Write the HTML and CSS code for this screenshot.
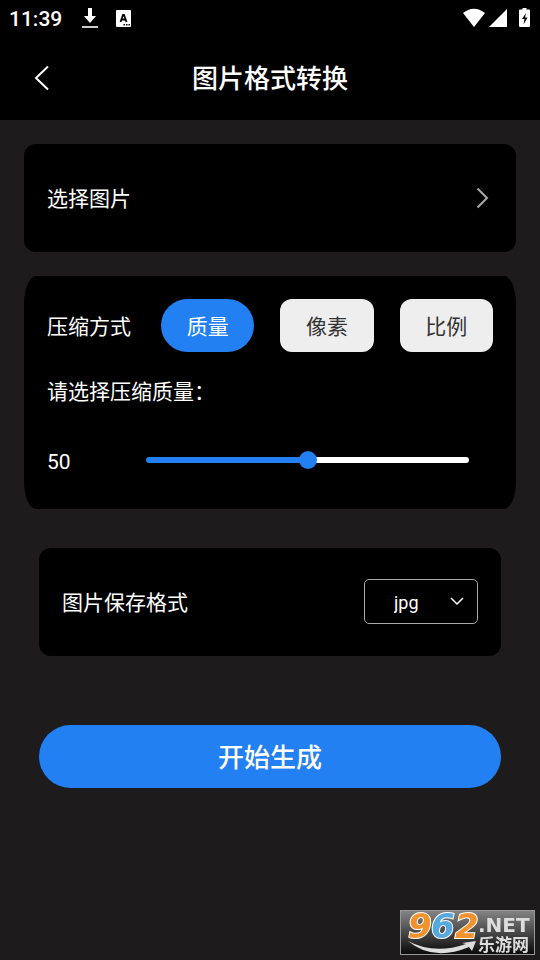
FILE: index.html
```html
<!DOCTYPE html>
<html lang="zh-CN">
<head>
<meta charset="utf-8">
<meta name="viewport" content="width=device-width, initial-scale=1">
<title>图片格式转换</title>
<link rel="stylesheet" href="styles.css">
</head>
<body>
<header class="top">
  <div class="status">
    <span class="clock">11:39</span>
    <svg class="download" width="16" height="20" viewBox="0 0 16 20" aria-hidden="true"><path d="M6 0h4v8h4l-6 7-6-7h4z" fill="#fff"/><path d="M0 18h16v2H0z" fill="#ccc"/></svg>
    <svg class="lang" width="15" height="17" viewBox="0 0 15 17" aria-hidden="true"><rect width="15" height="17" rx="1" fill="#fff"/><path d="M4.500 12 7 5h1l2.500 7M5.500 9.500h4" fill="none" stroke="#000" stroke-width="1.800"/><path d="M7.500 14h1.500v1.500H7.500zM10 14h1.500v1.500H10zM12.500 14H14v1.500h-1.500z" fill="#000"/></svg>
    <svg class="signals" width="68" height="20" viewBox="0 0 68 20" aria-hidden="true"><g fill="#fff"><path d="M0 5Q11-3.500 22 5L11 19z"/><path d="M26 19 44 1v18z"/><path d="M57 1.500h2.500V0h4v1.500H66q1 0 1 1V18q0 1-1 1h-9q-1 0-1-1V2.500q0-1 1-1z"/></g><path d="M63 5 59 11h2.500l-1 5.500 4-7H62z" fill="#000"/></svg>
  </div>
  <div class="bar">
    <button class="back" type="button" aria-label="返回"><svg width="16" height="26" viewBox="0 0 16 26"><path d="M14 1.500 2 13l12 11.500" fill="none" stroke="#fff" stroke-width="2"/></svg></button>
    <h1>图片格式转换</h1>
  </div>
</header>
<main>
  <button class="card pick" type="button">
    <span class="caption">选择图片</span>
    <svg width="13" height="22" viewBox="0 0 13 22" aria-hidden="true"><path d="M1.500 1.500 11 11l-9.500 9.500" fill="none" stroke="#aaa" stroke-width="2"/></svg>
  </button>
  <section class="card compress">
    <div class="modes">
      <span class="caption label">压缩方式</span>
      <button class="mode active" type="button" aria-pressed="true">质量</button>
      <button class="mode" type="button" aria-pressed="false">像素</button>
      <button class="mode" type="button" aria-pressed="false">比例</button>
    </div>
    <label class="hint" for="quality">请选择压缩质量：</label>
    <div class="quality">
      <output for="quality">50</output>
      <input id="quality" type="range" min="0" max="100" value="50">
    </div>
  </section>
  <div class="card save">
    <label class="caption" for="format">图片保存格式</label>
    <span class="picker">
      <select id="format"><option>jpg</option><option>png</option><option>webp</option></select>
      <svg width="14" height="9" viewBox="0 0 14 9" aria-hidden="true"><path d="m1 1 6 6 6-6" fill="none" stroke="#fff" stroke-width="1.500"/></svg>
    </span>
  </div>
  <button class="start" type="button">开始生成</button>
</main>
<svg class="mark" width="135" height="45" viewBox="0 0 135 45" role="img" aria-label="962.NET 乐游网">
  <defs>
    <linearGradient id="plate" x2="0" y2="1"><stop offset="0" stop-color="#858585"/><stop offset=".5" stop-color="#484848"/><stop offset="1" stop-color="#080808"/></linearGradient>
  </defs>
  <rect x=".5" y=".5" width="134" height="44" fill="url(#plate)" stroke="#999"/>
  <path d="M8 31Q34 45 66 34l-4-1 14-2-4 10-3-4Q33 52 8 31z" fill="#ddd"/>
  <g class="digits"><text x="8" y="28" fill="#f2922c">9</text><text x="31" y="28" fill="#55a9df">6</text><text x="55" y="28" fill="#f2922c">2</text></g>
  <text class="net" x="78" y="22">.NET</text>
  <text class="site" x="78" y="41">乐游网</text>
</svg>
</body>
</html>
```
FILE: styles.css
```css
* {
  box-sizing: border-box;
}

body {
  margin: 0;
  min-height: 100vh;
  background: #1d1b1c;
  color: #fff;
  font-family: Roboto, "Noto Sans CJK SC", sans-serif;
  font-size: 21px;
  line-height: 32px;
}

button,
select {
  margin: 0;
  padding: 0;
  border: 0;
  background: none;
  color: inherit;
  font: inherit;
}

svg {
  display: block;
}

.top {
  height: 120px;
  background: #000;
}

.status {
  display: flex;
  align-items: center;
  height: 36px;
  padding: 0 9px;
}

.clock {
  padding-top: 2px;
  font-weight: 500;
}

.download {
  margin-left: 20px;
}

.lang {
  margin-left: 18px;
}

.signals {
  margin-left: auto;
}

.bar {
  display: grid;
  grid-template-columns: 84px 1fr 84px;
  align-items: center;
  height: 84px;
}

.back {
  display: flex;
  justify-content: center;
}

h1 {
  margin: 0;
  padding-top: 2px;
  font-size: 26px;
  font-weight: 500;
  text-align: center;
}

main {
  display: flex;
  flex-direction: column;
  padding: 24px;
}

.card {
  padding: 23px;
  border-radius: 12px;
  background: #000;
}

.caption {
  padding-top: 2px;
}

.pick {
  display: flex;
  align-items: center;
  justify-content: space-between;
  min-height: 108px;
  padding-right: 27px;
  text-align: left;
}

.compress {
  margin-top: 24px;
  padding-bottom: 31px;
  border-radius: 12px / 28px;
}

.modes {
  display: flex;
  align-items: center;
  gap: 26px;
}

.label {
  margin-right: 4px;
}

.mode {
  flex: 1;
  height: 53px;
  padding-top: 2px;
  border-radius: 12px;
  background: #eee;
  color: #333;
}

.mode.active {
  border-radius: 27px;
  background: #2380f2;
  color: #fff;
}

.hint {
  display: block;
  margin-top: 24px;
}

.quality {
  display: flex;
  align-items: center;
  margin-top: 38px;
  padding-right: 24px;
}

.quality output {
  width: 99px;
}

.quality input {
  flex: 1;
  min-width: 0;
  height: 18px;
  margin: 0 0 4px;
  appearance: none;
  background: none;
}

.quality input::-webkit-slider-runnable-track {
  height: 6px;
  border-radius: 3px;
  background: linear-gradient(90deg, #2380f2 50%, #fff 50%);
}

.quality input::-webkit-slider-thumb {
  width: 18px;
  height: 18px;
  margin-top: -6px;
  appearance: none;
  border-radius: 50%;
  background: #2380f2;
}

.save {
  display: flex;
  align-items: center;
  justify-content: space-between;
  min-height: 108px;
  margin: 39px 15px 0;
}

.picker {
  display: grid;
  align-items: center;
  width: 114px;
  padding-bottom: 2px;
}

.picker select,
.picker svg {
  grid-area: 1 / 1;
}

.picker select {
  height: 45px;
  padding: 3px 29px 0;
  appearance: none;
  border: 1px solid #aaa;
  border-radius: 5px;
  font-size: 18px;
}

.picker svg {
  justify-self: end;
  margin-right: 14px;
  pointer-events: none;
}

.start {
  height: 63px;
  margin: 69px 15px 0;
  padding-top: 2px;
  border-radius: 32px;
  background: #2380f2;
  font-size: 26px;
  font-weight: 500;
}

.mark {
  position: fixed;
  right: 5px;
  bottom: 5px;
  overflow: visible;
}

.digits {
  font: italic bold 34px "DejaVu Sans", sans-serif;
  stroke: #fff;
  stroke-width: 2px;
  paint-order: stroke;
}

.net {
  fill: #ddd;
  font: bold 20px "DejaVu Sans", sans-serif;
}

.site {
  fill: #ddd;
  font: bold 17px "Noto Sans CJK SC", sans-serif;
}
```
